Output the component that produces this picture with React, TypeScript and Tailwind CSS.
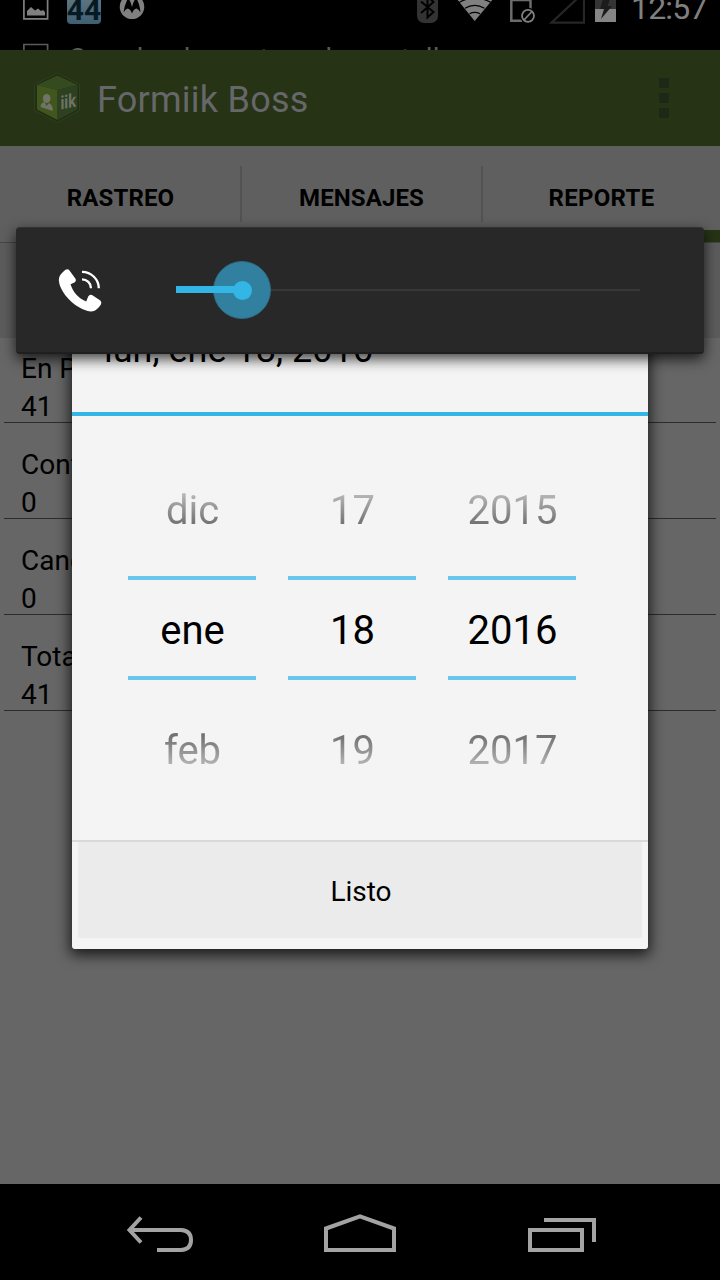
import React from "react";

const rows = [
  { label: "En Proceso", value: "41" },
  { label: "Confirmadas", value: "0" },
  { label: "Canceladas", value: "0" },
  { label: "Total", value: "41" },
];

const columns = [
  ["dic", "ene", "feb"],
  ["17", "18", "19"],
  ["2015", "2016", "2017"],
];

function StatusBar() {
  return (
    <div className="h-[50px] overflow-hidden bg-black">
      <div className="flex h-[30px] items-start">
        <svg className="ml-[23px] h-[30px] w-[26px] shrink-0" viewBox="23 0 26 30" fill="none">
          <path d="M23.9 -4V18.9H47.6V-4" stroke="#808080" strokeWidth="1.7" />
          <path d="M27 15.5V11L31 7L35 10.5L38 8.5L41 11L43 10L45 12V15.5Z" fill="#808080" />
        </svg>
        <div className="ml-[18px] flex h-6 w-[34px] shrink-0 items-end justify-center rounded-b-sm bg-linear-to-b from-[#5c7480] to-[#3e5f72] text-[30px] font-bold leading-[28px] text-[#071a24]">
          44
        </div>
        <svg className="ml-[18px] h-[30px] w-[26px] shrink-0" viewBox="119 0 26 30">
          <circle cx="132" cy="6.7" r="12.3" fill="#808080" />
          <path d="M123.5 12.5Q125 3 128.3 -2Q131 2 132 7Q133 2 136 -2Q139.500 3 140.500 12.500Q138.500 9 136.500 8.500Q133.500 8.800 132 13.500Q130.500 8.800 127.500 8.500Q125.500 9 123.500 12.500Z" fill="#000" />
        </svg>
        <svg className="ml-[272px] h-[30px] w-[21px] shrink-0" viewBox="417 0 21 30" fill="none">
          <rect x="417" y="-8" width="21" height="31" rx="7" fill="#333" />
          <path d="M421 1.500L433.500 12L427.500 17.500V-4L433.500 2L421 13" stroke="#000" strokeWidth="2" />
        </svg>
        <svg className="ml-[18px] h-[30px] w-[38px] shrink-0" viewBox="456 0 38 30" fill="none">
          <path d="M456 -2L474.700 21L494 -2Z" fill="#808080" />
          <path d="M469.500 13.800Q474.700 11 480 13.800M465 8.300Q474.700 2.300 484.500 8.300M459 2.500Q474.700 -6.500 491 2.500" stroke="#000" strokeWidth="1.300" />
        </svg>
        <svg className="ml-[16px] h-[30px] w-[26px] shrink-0" viewBox="510 0 26 30" fill="none">
          <path d="M511.300 -4V20.800H522M530.500 9V0H511" stroke="#6b6b6b" strokeWidth="2.500" />
          <circle cx="528" cy="15.800" r="8" fill="#000" />
          <circle cx="528" cy="15.800" r="6" stroke="#808080" strokeWidth="1.800" />
          <path d="M524 20L532 11.500" stroke="#808080" strokeWidth="1.800" />
        </svg>
        <svg className="ml-[13px] h-[30px] w-[36px] shrink-0" viewBox="549 0 36 30" fill="none">
          <path d="M580 -4L551.500 22.700H584V-4" stroke="#262626" strokeWidth="2.200" />
        </svg>
        <svg className="ml-[10px] h-[30px] w-[21px] shrink-0" viewBox="595 0 21 30">
          <path d="M595 -1H616V22H595Z" fill="#343434" />
          <path d="M595 9H616V22H595Z" fill="#858585" />
          <path d="M603 -1L600 9H604L601 19L612 6H607.500L610 -1Z" fill="#1c1c1c" />
        </svg>
        <span className="-mt-[11px] ml-[15px] shrink-0 text-[32px] leading-[38px] tracking-[-0.8px] text-[#808080]">12:57</span>
      </div>
      <div className="flex h-[20px] items-start overflow-hidden">
        <svg className="ml-[23px] h-5 w-[26px] shrink-0" viewBox="23 30 26 20" fill="none">
          <path d="M23.900 55V44.500H47.600V55" stroke="#5a5a5a" strokeWidth="1.700" />
        </svg>
        <span className="ml-[19px] mt-[10px] whitespace-nowrap text-[28px] leading-[38px] tracking-[0.15px] text-[#5a5a5a]">
          Guardando captura de pantalla…
        </span>
      </div>
    </div>
  );
}

function ActionBar() {
  return (
    <header className="flex h-24 items-center bg-[#263315]">
      <svg className="ml-8 h-[52px] w-[50px]" viewBox="32 72 50 52" fill="none">
        <path d="M57.300 73L79.500 84.500V110.500L57.300 122.500L34.700 110.500V84.500Z" fill="#202e15" stroke="#2f3f20" strokeWidth="1" />
        <path d="M57.300 75.500L77.500 85L57.500 90L37 85Z" fill="#364a20" />
        <path d="M37 85L57.500 90V120L37 109.500Z" fill="#40561d" />
        <path d="M77.500 85L57.500 90V120L77.500 109.500Z" fill="#2d4120" />
        <ellipse cx="46.700" cy="98.500" rx="3.800" ry="4.500" fill="#707367" />
        <path d="M40.500 107Q40.500 103 44.500 102L46.500 106L49 103Q53 105 52.800 111Z" fill="#707367" />
        <g fill="#707367" transform="matrix(1 -.18 0 1 60.500 109.500)" fontFamily="Roboto, sans-serif" fontWeight="bold" fontSize="19">
          <text textLength="15.500" lengthAdjust="spacingAndGlyphs">iik</text>
        </g>
      </svg>
      <h1 className="ml-[15px] mt-[3px] text-[36px] leading-[44px] tracking-[0.25px] text-[#66676a]">Formiik Boss</h1>
      <div className="ml-auto mr-[51px] flex flex-col gap-[5px]">
        <i className="size-[10px] bg-[#1d2816]" />
        <i className="size-[10px] bg-[#1d2816]" />
        <i className="size-[10px] bg-[#1d2816]" />
      </div>
    </header>
  );
}

function Tabs() {
  return (
    <nav className="flex h-[97px] flex-col border-b border-[#454545] bg-[#5f5f5f]">
      <div className="flex h-[84px] pt-5 text-[24px] font-bold leading-[64px] text-black">
        <span className="h-14 w-[242px] border-r-2 border-[#525252] pl-px text-center tracking-[0.1px]">RASTREO</span>
        <span className="h-14 w-[241px] border-r-2 border-[#525252] text-center tracking-[0.1px]">MENSAJES</span>
        <span className="h-14 w-[237px] text-center tracking-[0.3px]">REPORTE</span>
      </div>
      <div className="ml-auto h-3 w-[237px] bg-[#263315]" />
    </nav>
  );
}

function DateDialog() {
  return (
    <section className="absolute left-[72px] top-[320px] flex h-[629px] w-[576px] flex-col rounded-[3px] bg-[#f4f4f4] shadow-[0_4px_14px_2px_rgba(0,0,0,0.75)]">
      <h2 className="h-24 border-b-4 border-[#33b5e5] pl-8 pt-[9px] text-[36px] leading-[42px] text-black">lun, ene 18, 2016</h2>
      <div className="flex h-[424px] gap-8 pl-14 pt-[34px] text-[40px]">
        {columns.map(([before, current, after]) => (
          <div key={current} className="w-32 text-center">
            <div className="h-[120px] bg-linear-to-b from-[#bcbcbc] from-[42px] to-[#6e6e6e] to-[76px] bg-clip-text pl-px leading-[122px] text-transparent">{before}</div>
            <div className="-mt-px flex h-[120px] flex-col py-[7px]">
              <div className="h-[104px] border-y-4 border-[#68c7ea] pl-px leading-[102px] text-black">{current}</div>
            </div>
            <div className="mt-px h-[120px] bg-linear-to-b from-[#707070] from-[45px] to-[#bcbcbc] to-[78px] bg-clip-text pl-px leading-[122px] text-transparent">{after}</div>
          </div>
        ))}
      </div>
      <div className="h-[109px] border-t-2 border-[#d9d9d9] px-[6px]">
        <button className="block h-24 w-full bg-[#ebebeb] pl-[2px] pt-[2px] text-[28px] leading-[96px] text-black">Listo</button>
      </div>
    </section>
  );
}

function VolumePanel() {
  return (
    <section className="absolute left-4 top-[227px] flex h-[127px] w-[688px] items-center rounded-[4px] border-b-2 border-t border-b-[#1f1f1f] border-t-[#333] bg-[#282828] shadow-[0_5px_14px_0_rgba(0,0,0,0.75)]">
      <svg className="ml-10 h-12 w-12" viewBox="56 266 48 48" fill="none">
        <path d="M58.900 281C58.500 276 61.500 273 65.500 269.800Q68 268.300 69.500 270.500L75.700 279Q76.600 281 74.500 282.500L70.500 284.200C73 292 78 298 86.200 301.500L88.200 296.500Q89.500 294 92 295L100.300 300.500Q102 302 101 304.300C98.500 308.500 95 311.800 90.500 311.500C76 309.500 60 293 58.900 281Z" fill="#fff" />
        <path d="M82 271.800A17 16.500 0 0 1 98.800 288.300M82 279.300A9 9 0 0 1 91 288.300" stroke="#fff" strokeWidth="2.300" />
      </svg>
      <div className="relative ml-[72px] flex h-14 w-[464px] items-center">
        <div className="h-[2px] flex-1 bg-[#383838]" />
        <div className="absolute left-[37px] top-[-1px] flex size-[58px] items-center justify-center rounded-full border border-[#2d6a82] bg-[#32809f]">
          <div className="size-[19px] rounded-full bg-[#33b5e5]" />
        </div>
        <div className="absolute left-0 top-[24px] h-[7px] w-[66px] bg-[#33b5e5]" />
      </div>
    </section>
  );
}

function NavigationBar() {
  return (
    <footer className="h-24 bg-black">
      <svg className="block h-24 w-full" viewBox="0 1184 720 96" fill="none" stroke="#a3a3a3" strokeWidth="4">
        <path d="M157 1250H181Q191 1249.500 191 1240Q191 1230.500 181 1230H129M141 1217.500L129.500 1230L141 1242.500" />
        <path d="M326 1228.500L360 1216.300L394 1228.500V1250H326Z" />
        <path d="M530 1230H582V1250H530ZM544 1220H594V1242" />
      </svg>
    </footer>
  );
}

export default function App() {
  return (
    <div className="relative flex h-[1280px] w-[720px] flex-col overflow-hidden bg-[#666] font-['Roboto',sans-serif]">
      <StatusBar />
      <ActionBar />
      <Tabs />
      <main className="flex flex-1 flex-col">
        <div className="h-[95px] bg-[#5c5c5c]" />
        <ul className="-mt-[11px] px-1">
          {rows.map((row) => (
            <li key={row.label} className="flex h-24 flex-col justify-end gap-[6px] border-b border-[#2c2c2c] pl-[17px] text-[28px] leading-[30px] text-black">
              <span className="mb-[2px]">{row.label}</span>
              <span>{row.value}</span>
            </li>
          ))}
        </ul>
      </main>
      <NavigationBar />
      <DateDialog />
      <VolumePanel />
    </div>
  );
}
